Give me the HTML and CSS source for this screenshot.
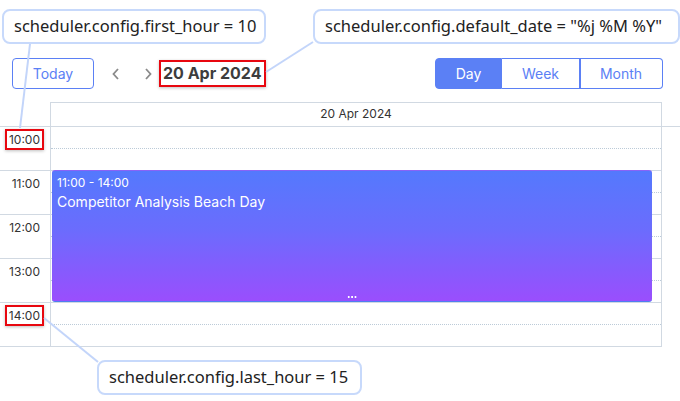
FILE: index.html
```html
<!DOCTYPE html>
<html>
<head>
<meta charset="utf-8">
<link rel="stylesheet" href="styles.css">
</head>
<body>
<div class="page">
  <div class="toolbar">
    <button class="today">Today</button>
    <div class="arrows">
      <svg class="arrow" width="10" height="14" viewBox="0 0 10 14"><path d="M7 2 L2.5 7 L7 12" fill="none" stroke="#8a8a8a" stroke-width="1.8"/></svg>
      <svg class="arrow" width="10" height="14" viewBox="0 0 10 14"><path d="M3 2 L7.5 7 L3 12" fill="none" stroke="#8a8a8a" stroke-width="1.8"/></svg>
    </div>
    <div class="date hl">20 Apr 2024</div>
    <div class="tabs">
      <div class="tab active">Day</div>
      <div class="tab week">Week</div>
      <div class="tab month">Month</div>
    </div>
  </div>

  <div class="grid">
    <div class="head">
      <div class="head-gap"></div>
      <div class="head-cell">20 Apr 2024</div>
    </div>
    <div class="body">
      <div class="times">
        <div class="hour"><span class="lbl hl">10:00</span></div>
        <div class="hour"><span class="lbl">11:00</span></div>
        <div class="hour"><span class="lbl">12:00</span></div>
        <div class="hour"><span class="lbl">13:00</span></div>
        <div class="hour"><span class="lbl hl">14:00</span></div>
      </div>
      <div class="day">
        <div class="slot"></div>
        <div class="slot"></div>
        <div class="slot"></div>
        <div class="slot"></div>
        <div class="slot"></div>
        <div class="event">
          <div class="ev-time">11:00 - 14:00</div>
          <div class="ev-title">Competitor Analysis Beach Day</div>
          <div class="ev-handle"></div>
        </div>
      </div>
      <div class="rest"></div>
    </div>
  </div>

  <svg class="connectors" width="680" height="401" viewBox="0 0 680 401">
    <line x1="30" y1="44" x2="20" y2="128" />
    <line x1="313" y1="42" x2="266" y2="72" />
    <line x1="44" y1="318" x2="98" y2="362" />
  </svg>
  <div class="callout c1">scheduler.config.first_hour = 10</div>
  <div class="callout c2">scheduler.config.default_date = "%j %M %Y"</div>
  <div class="callout c3">scheduler.config.last_hour = 15</div>
</div>
</body>
</html>
```
FILE: styles.css
```css
* { box-sizing: border-box; }
html, body { margin: 0; padding: 0; background: #fff; }
body { font-family: Inter, "Noto Sans", sans-serif; color: #333; }
.page { position: relative; width: 680px; height: 401px; overflow: hidden; padding-top: 58px; }

.toolbar { display: flex; align-items: center; height: 31px; padding-left: 12px; }
.today {
  width: 82px; height: 31px; border: 1px solid #5b80f5; border-radius: 4px;
  background: #fff; color: #5b80f5; font: 14px Inter, sans-serif; padding: 0;
}
.arrows { display: flex; gap: 22px; margin-left: 17px; align-items: center; }
.arrow { display: block; }
.date {
  margin-left: 6px; font-size: 16px; font-weight: 700; color: #3d3d3d;
  height: 27px; line-height: 23px; padding: 0 2px;
}
.hl { border: 2px solid #e8070f; box-shadow: 0 1px 3px rgba(0,0,0,0.25); }
.tabs { display: flex; margin-left: auto; margin-right: 17px; height: 31px; }
.tab {
  height: 31px; line-height: 29px; text-align: center; font-size: 14px; color: #5b80f5;
  border: 1px solid #5b80f5; background: #fff;
}
.tab.active { width: 67px; background: #5b80f5; color: #fff; border-radius: 4px 0 0 4px; }
.tab.week { width: 78px; border-left: none; }
.tab.month { width: 83px; border-left-width: 0; border-radius: 0 4px 4px 0; box-shadow: inset 1px 0 0 #5b80f5; }

.grid { margin-top: 13px; }
.head { display: flex; height: 24px; }
.head-gap { width: 50px; }
.head-cell {
  width: 612px; border: 1px solid #d1d9e2; border-bottom: none;
  text-align: center; font-size: 12px; line-height: 22px; color: #333;
}
.body { display: flex; border-top: 1px solid #d1d9e2; width: 680px; }
.times { width: 51px; border-right: 1px solid #d1d9e2; }
.hour {
  height: 44px; border-bottom: 1px solid #d1d9e2; text-align: right;
  padding: 1px 6px 0 0;
}
.lbl {
  display: inline-block; font-size: 12px; line-height: 17px; padding: 0 2px;
  border: 2px solid transparent; color: #333;
}
.lbl.hl { border-color: #e8070f; }
.day { position: relative; width: 611px; border-right: 1px solid #d1d9e2; }
.slot { height: 44px; border-bottom: 1px solid #d1d9e2; position: relative; }
.slot::after {
  content: ""; position: absolute; left: 0; right: 0; top: 21px;
  border-top: 1px dotted #bccbd8;
}
.event {
  position: absolute; left: 1px; top: 43px; width: 600px; height: 132px;
  border-radius: 3px; color: #fff; padding: 5px 5px;
  background: linear-gradient(to bottom, #5479fd, #6b6cfd 45%, #9a4efd);
  border-top: 1px solid #8a63f6; border-bottom: 1px solid #4f7ef0;
}
.ev-time { font-size: 12px; line-height: 14px; }
.ev-title { font-size: 14px; line-height: 20px; margin-top: 2px; }
.ev-handle {
  position: absolute; left: 295px; bottom: 3px; width: 10px; height: 2px;
  background: radial-gradient(circle, #fff 0.9px, transparent 1.2px) 0 0 / 3.4px 2px repeat-x;
}
.rest { flex: 1; }

.connectors { position: absolute; left: 0; top: 0; pointer-events: none; }
.connectors line { stroke: #c3d5fa; stroke-width: 2; }
.callout {
  position: absolute; height: 35px; background: #fff; border: 2px solid #c7d9fb;
  border-radius: 8px; font-family: "Noto Sans", sans-serif; font-size: 16.5px; color: #222;
  line-height: 30px; padding-left: 10px; white-space: nowrap;
}
.c1 { left: 2px; top: 9px; width: 264px; }
.c2 { left: 313px; top: 9px; width: 367px; }
.c3 { left: 97px; top: 360px; width: 265px; }
```
